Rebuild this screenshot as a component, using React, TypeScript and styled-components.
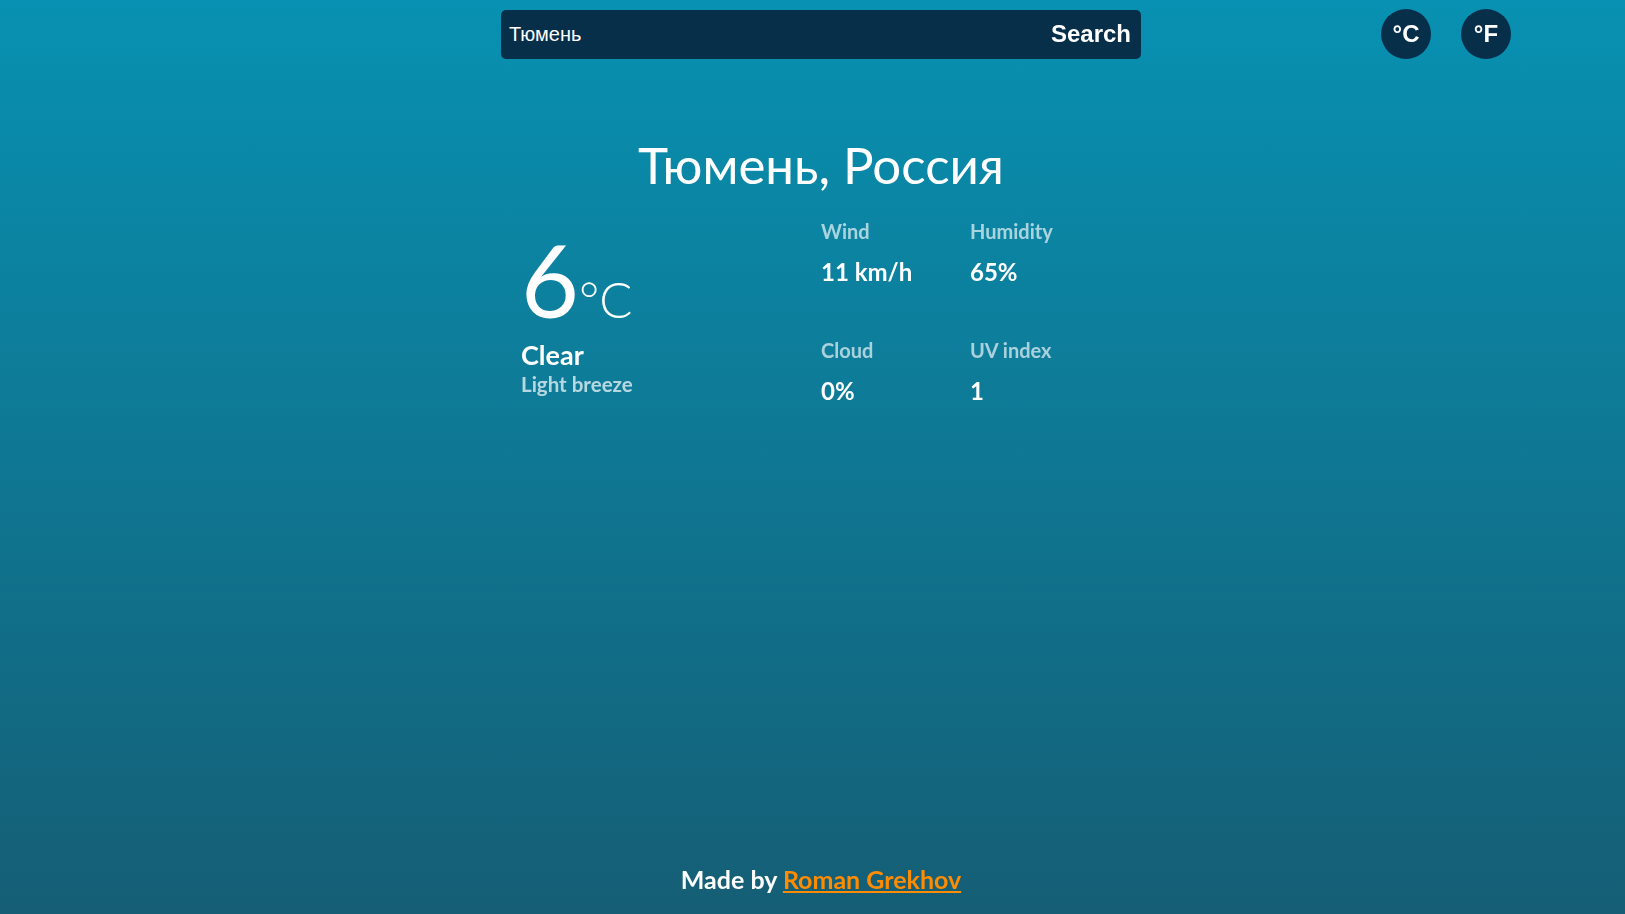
import React, { useEffect, useRef, useState } from 'react';
import styled, { createGlobalStyle } from 'styled-components';

const GlobalStyle = createGlobalStyle`
    * {
        box-sizing: border-box;
    }
    html, body {
        margin: 0;
        padding: 0;
    }
    body {
        font-family: Lato, "Noto Sans", sans-serif;
        color: #ffffff;
    }
`;

const stats = [
    { label: 'Wind', value: '11 km/h' },
    { label: 'Humidity', value: '65%' },
    { label: 'Cloud', value: '0%' },
    { label: 'UV index', value: '1' },
];

export default function App() {
    const [query, setQuery] = useState<string>('Тюмень');
    const [unit, setUnit] = useState<'C' | 'F'>('C');
    const inputRef = useRef<HTMLInputElement>(null);

    useEffect(() => {
        const el = inputRef.current;
        if (el) {
            el.focus();
            el.setSelectionRange(el.value.length, el.value.length);
        }
    }, []);

    return (
        <Page>
            <GlobalStyle />
            <Header>
                <SearchForm onSubmit={(e) => e.preventDefault()}>
                    <SearchInput
                        ref={inputRef}
                        value={query}
                        onChange={(e) => setQuery(e.target.value)}
                    />
                    <SearchButton type="submit">Search</SearchButton>
                </SearchForm>
                <UnitSwitch>
                    <UnitButton onClick={() => setUnit('C')}>°C</UnitButton>
                    <UnitButton onClick={() => setUnit('F')}>°F</UnitButton>
                </UnitSwitch>
            </Header>

            <Main>
                <City>Тюмень, Россия</City>
                <Weather>
                    <Current>
                        <Temp>
                            <TempValue>6</TempValue>
                            <TempUnit>°{unit}</TempUnit>
                        </Temp>
                        <Condition>Clear</Condition>
                        <SubCondition>Light breeze</SubCondition>
                    </Current>
                    <StatsGrid>
                        {stats.map((s) => (
                            <Stat key={s.label}>
                                <StatLabel>{s.label}</StatLabel>
                                <StatValue>{s.value}</StatValue>
                            </Stat>
                        ))}
                    </StatsGrid>
                </Weather>
            </Main>

            <Footer>
                Made by <FooterLink href="#">Roman Grekhov</FooterLink>
            </Footer>
        </Page>
    );
}

const Page = styled.div`
    min-height: 100vh;
    display: flex;
    flex-direction: column;
    padding-left: 17px;
    background: linear-gradient(180deg, #0891b2 0%, #155e75 100%);
`;

const Header = styled.header`
    display: grid;
    grid-template-columns: 1fr 640px 1fr;
    align-items: center;
    padding-top: 9px;
`;

const SearchForm = styled.form`
    grid-column: 2;
    height: 49px;
    display: flex;
    align-items: center;
    background: #072f4a;
    border-radius: 5px;
    padding: 0 10px 0 8px;
`;

const SearchInput = styled.input`
    flex: 1;
    min-width: 0;
    background: transparent;
    border: none;
    outline: none;
    color: #ffffff;
    caret-color: #ffffff;
    font-family: "Liberation Sans", Arial, sans-serif;
    font-size: 20px;
    padding: 0;
`;

const SearchButton = styled.button`
    background: none;
    border: none;
    color: #ffffff;
    font-family: "Liberation Sans", Arial, sans-serif;
    font-weight: 700;
    font-size: 24px;
    cursor: pointer;
    padding: 0;
`;

const UnitSwitch = styled.div`
    grid-column: 3;
    justify-self: end;
    display: flex;
    gap: 30px;
    padding-right: 114px;
`;

const UnitButton = styled.button`
    width: 50px;
    height: 50px;
    border-radius: 50%;
    border: none;
    background: #072f4a;
    color: #ffffff;
    font-family: "Liberation Sans", Arial, sans-serif;
    font-weight: 700;
    font-size: 24px;
    cursor: pointer;
    padding: 0;
`;

const Main = styled.main`
    width: 640px;
    margin: 0 auto;
    padding-top: 76px;
`;

const City = styled.h1`
    margin: 0;
    text-align: center;
    font-weight: 400;
    font-size: 51px;
    line-height: 60px;
`;

const Weather = styled.section`
    display: grid;
    grid-template-columns: 1fr 1fr;
    margin-top: 24px;
`;

const Current = styled.div`
    display: flex;
    flex-direction: column;
    padding-left: 20px;
    padding-top: 10px;
`;

const Temp = styled.div`
    display: flex;
    align-items: baseline;
    line-height: 1;
`;

const TempValue = styled.span`
    font-size: 100px;
    font-weight: 400;
`;

const TempUnit = styled.span`
    font-size: 49px;
    font-weight: 300;
`;

const Condition = styled.div`
    font-size: 27px;
    font-weight: 700;
    margin-top: 9px;
`;

const SubCondition = styled.div`
    font-size: 20.5px;
    font-weight: 700;
    color: rgba(255, 255, 255, 0.7);
    margin-top: 1px;
`;

const StatsGrid = styled.div`
    display: grid;
    grid-template-columns: 149px 149px;
    row-gap: 52px;
`;

const Stat = styled.div`
    display: flex;
    flex-direction: column;
    gap: 14px;
`;

const StatLabel = styled.span`
    font-size: 20px;
    font-weight: 700;
    color: rgba(255, 255, 255, 0.65);
`;

const StatValue = styled.span`
    font-size: 24px;
    font-weight: 700;
`;

const Footer = styled.footer`
    margin-top: auto;
    padding-bottom: 20px;
    text-align: center;
    font-size: 25px;
    font-weight: 700;
`;

const FooterLink = styled.a`
    color: #ff8c00;
    font-weight: 700;
`;
